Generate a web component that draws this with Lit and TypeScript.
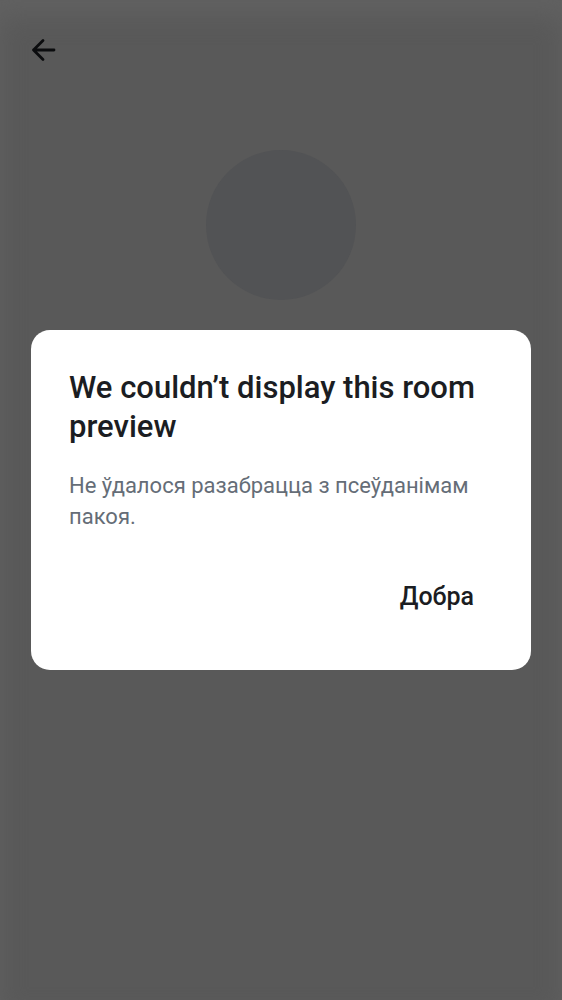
import { LitElement, html, css } from "lit";
import { customElement, state } from "lit/decorators.js";

@customElement("app-root")
class AppRoot extends LitElement {
  @state() private open = true;

  static styles = css`
    :host {
      display: block;
      font-family: Roboto, sans-serif;
      color: #1b1d22;
    }
    .screen {
      position: relative;
      min-height: 100vh;
      box-sizing: border-box;
      background: #595959;
      box-shadow: inset 0 16px 24px #616161;
    }
    .top-bar {
      display: flex;
      align-items: center;
      height: 100px;
      padding: 0 28px;
    }
    .back {
      display: flex;
      padding: 0;
      border: 0;
      background: none;
      color: #0b0c0e;
    }
    .avatar {
      width: 150px;
      height: 150px;
      margin: 50px auto 0;
      border-radius: 50%;
      background: #525355;
    }
    .overlay {
      position: absolute;
      inset: 0;
      display: flex;
      align-items: center;
      padding: 0 31px;
    }
    .dialog {
      flex: 1;
      padding: 38px 38px 43px;
      border-radius: 19px;
      background: #fff;
    }
    h1 {
      margin: 0;
      font-size: 31px;
      line-height: 39px;
      font-weight: 500;
    }
    p {
      margin: 24px 0 0;
      font-size: 22px;
      line-height: 31px;
      color: #656d77;
    }
    .actions {
      display: flex;
      justify-content: flex-end;
      margin-top: 33px;
    }
    .confirm {
      height: 62px;
      padding: 0 19px;
      border: 0;
      background: none;
      color: inherit;
      font: 500 25px/31px Roboto, sans-serif;
    }
  `;

  private close() {
    this.open = false;
  }

  render() {
    return html`
      <main class="screen">
        <header class="top-bar">
          <button class="back" aria-label="Back">
            <svg width="30" height="30" viewBox="0 0 30 30" fill="none" stroke="currentColor" stroke-width="2.8" stroke-linecap="round" stroke-linejoin="round">
              <path d="M26 15H5.500M15 5.500L5.500 15L15 24.500" />
            </svg>
          </button>
        </header>
        <div class="avatar"></div>
        ${this.open
          ? html`<div class="overlay">
              <section class="dialog" role="alertdialog" aria-labelledby="title" aria-describedby="message">
                <h1 id="title">We couldn’t display this room preview</h1>
                <p id="message">Не ўдалося разабрацца з псеўданімам пакоя.</p>
                <div class="actions">
                  <button class="confirm" @click=${this.close}>Добра</button>
                </div>
              </section>
            </div>`
          : null}
      </main>
    `;
  }
}
